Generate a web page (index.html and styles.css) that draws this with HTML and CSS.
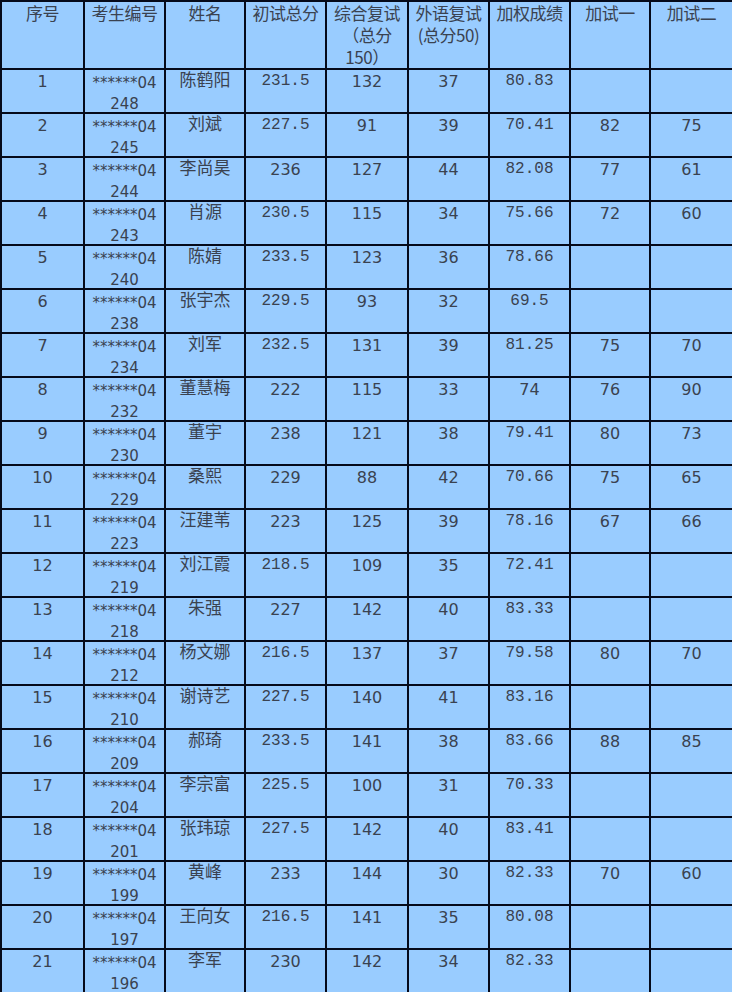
FILE: index.html
```html
<!DOCTYPE html>
<html lang="zh">
<head>
<meta charset="utf-8">
<link rel="stylesheet" href="styles.css">
</head>
<body>
<table class="grid">
<colgroup>
<col class="c1"><col class="c2"><col class="c3"><col class="c4"><col class="c5"><col class="c6"><col class="c7"><col class="c8"><col class="c9">
</colgroup>
<thead>
<tr class="head">
<th>序号</th><th>考生编号</th><th>姓名</th><th>初试总分</th><th>综合复试<br>（总分<br>150）</th><th>外语复试<br>(总分50)</th><th>加权成绩</th><th>加试一</th><th>加试二</th>
</tr>
</thead>
<tbody>
<tr><td class="num">1</td><td class="id"><div class="idbox">******04<br>248</div></td><td class="name">陈鹤阳</td><td class="mono">231.5</td><td class="num">132</td><td class="num">37</td><td class="mono">80.83</td><td></td><td></td></tr>
<tr><td class="num">2</td><td class="id"><div class="idbox">******04<br>245</div></td><td class="name">刘斌</td><td class="mono">227.5</td><td class="num">91</td><td class="num">39</td><td class="mono">70.41</td><td class="num">82</td><td class="num">75</td></tr>
<tr><td class="num">3</td><td class="id"><div class="idbox">******04<br>244</div></td><td class="name">李尚昊</td><td class="num">236</td><td class="num">127</td><td class="num">44</td><td class="mono">82.08</td><td class="num">77</td><td class="num">61</td></tr>
<tr><td class="num">4</td><td class="id"><div class="idbox">******04<br>243</div></td><td class="name">肖源</td><td class="mono">230.5</td><td class="num">115</td><td class="num">34</td><td class="mono">75.66</td><td class="num">72</td><td class="num">60</td></tr>
<tr><td class="num">5</td><td class="id"><div class="idbox">******04<br>240</div></td><td class="name">陈婧</td><td class="mono">233.5</td><td class="num">123</td><td class="num">36</td><td class="mono">78.66</td><td></td><td></td></tr>
<tr><td class="num">6</td><td class="id"><div class="idbox">******04<br>238</div></td><td class="name">张宇杰</td><td class="mono">229.5</td><td class="num">93</td><td class="num">32</td><td class="mono">69.5</td><td></td><td></td></tr>
<tr><td class="num">7</td><td class="id"><div class="idbox">******04<br>234</div></td><td class="name">刘军</td><td class="mono">232.5</td><td class="num">131</td><td class="num">39</td><td class="mono">81.25</td><td class="num">75</td><td class="num">70</td></tr>
<tr><td class="num">8</td><td class="id"><div class="idbox">******04<br>232</div></td><td class="name">董慧梅</td><td class="num">222</td><td class="num">115</td><td class="num">33</td><td class="num">74</td><td class="num">76</td><td class="num">90</td></tr>
<tr><td class="num">9</td><td class="id"><div class="idbox">******04<br>230</div></td><td class="name">董宇</td><td class="num">238</td><td class="num">121</td><td class="num">38</td><td class="mono">79.41</td><td class="num">80</td><td class="num">73</td></tr>
<tr><td class="num">10</td><td class="id"><div class="idbox">******04<br>229</div></td><td class="name">桑熙</td><td class="num">229</td><td class="num">88</td><td class="num">42</td><td class="mono">70.66</td><td class="num">75</td><td class="num">65</td></tr>
<tr><td class="num">11</td><td class="id"><div class="idbox">******04<br>223</div></td><td class="name">汪建苇</td><td class="num">223</td><td class="num">125</td><td class="num">39</td><td class="mono">78.16</td><td class="num">67</td><td class="num">66</td></tr>
<tr><td class="num">12</td><td class="id"><div class="idbox">******04<br>219</div></td><td class="name">刘江霞</td><td class="mono">218.5</td><td class="num">109</td><td class="num">35</td><td class="mono">72.41</td><td></td><td></td></tr>
<tr><td class="num">13</td><td class="id"><div class="idbox">******04<br>218</div></td><td class="name">朱强</td><td class="num">227</td><td class="num">142</td><td class="num">40</td><td class="mono">83.33</td><td></td><td></td></tr>
<tr><td class="num">14</td><td class="id"><div class="idbox">******04<br>212</div></td><td class="name">杨文娜</td><td class="mono">216.5</td><td class="num">137</td><td class="num">37</td><td class="mono">79.58</td><td class="num">80</td><td class="num">70</td></tr>
<tr><td class="num">15</td><td class="id"><div class="idbox">******04<br>210</div></td><td class="name">谢诗艺</td><td class="mono">227.5</td><td class="num">140</td><td class="num">41</td><td class="mono">83.16</td><td></td><td></td></tr>
<tr><td class="num">16</td><td class="id"><div class="idbox">******04<br>209</div></td><td class="name">郝琦</td><td class="mono">233.5</td><td class="num">141</td><td class="num">38</td><td class="mono">83.66</td><td class="num">88</td><td class="num">85</td></tr>
<tr><td class="num">17</td><td class="id"><div class="idbox">******04<br>204</div></td><td class="name">李宗富</td><td class="mono">225.5</td><td class="num">100</td><td class="num">31</td><td class="mono">70.33</td><td></td><td></td></tr>
<tr><td class="num">18</td><td class="id"><div class="idbox">******04<br>201</div></td><td class="name">张玮琼</td><td class="mono">227.5</td><td class="num">142</td><td class="num">40</td><td class="mono">83.41</td><td></td><td></td></tr>
<tr><td class="num">19</td><td class="id"><div class="idbox">******04<br>199</div></td><td class="name">黄峰</td><td class="num">233</td><td class="num">144</td><td class="num">30</td><td class="mono">82.33</td><td class="num">70</td><td class="num">60</td></tr>
<tr><td class="num">20</td><td class="id"><div class="idbox">******04<br>197</div></td><td class="name">王向女</td><td class="mono">216.5</td><td class="num">141</td><td class="num">35</td><td class="mono">80.08</td><td></td><td></td></tr>
<tr><td class="num">21</td><td class="id"><div class="idbox">******04<br>196</div></td><td class="name">李军</td><td class="num">230</td><td class="num">142</td><td class="num">34</td><td class="mono">82.33</td><td></td><td></td></tr>
</tbody>
</table>
</body>
</html>
```
FILE: styles.css
```css
html, body {
  margin: 0;
  padding: 0;
  background: #ffffff;
}

.grid {
  border-collapse: collapse;
  table-layout: fixed;
  width: 732px;
  background: #99ccff;
  color: #3a4250;
  font-family: "Noto Sans CJK SC", "DejaVu Sans", sans-serif;
  font-size: 17px;
  line-height: 21px;
}

.c1 { width: 83px; }
.c2 { width: 81px; }
.c3 { width: 80px; }
.c4 { width: 81px; }
.c5 { width: 82px; }
.c6 { width: 81px; }
.c7 { width: 81px; }
.c8 { width: 80px; }
.c9 { width: 83px; }

.grid th,
.grid td {
  border: 2px solid #050a1a;
  padding: 0;
  text-align: center;
  vertical-align: top;
  overflow: visible;
  white-space: nowrap;
}

.grid th {
  font-weight: normal;
  line-height: 22px;
  letter-spacing: -0.5px;
}

.grid td {
  padding-top: 1px;
}

.grid .name {
  line-height: 18px;
  padding-top: 0;
}

.num {
  font-family: "DejaVu Sans", "Liberation Sans", sans-serif;
  font-size: 16px;
}

.mono {
  font-family: "Liberation Mono", "DejaVu Sans Mono", monospace;
  font-size: 16px;
}

.grid .id {
  font-family: "DejaVu Sans", sans-serif;
  font-size: 15px;
  padding-top: 0;
}

.idbox {
  height: 42px;
  padding-top: 3px;
  box-sizing: border-box;
  line-height: 21px;
}
```
